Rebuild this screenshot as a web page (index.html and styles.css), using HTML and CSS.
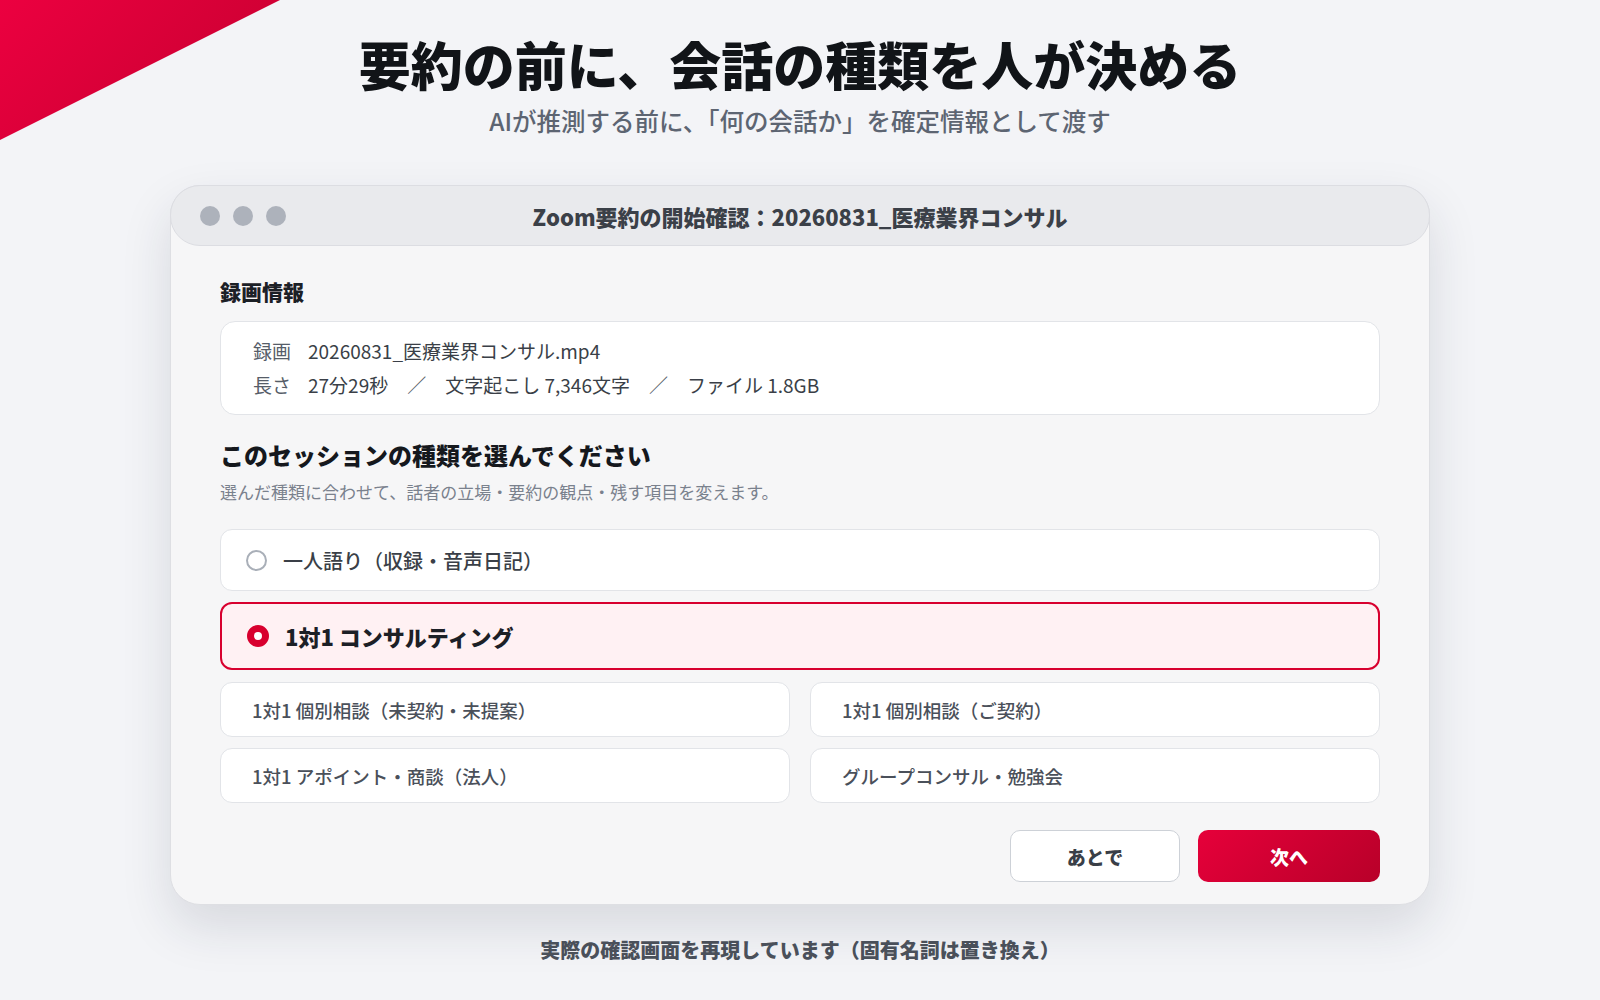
FILE: index.html
```html
<!DOCTYPE html>
<html lang="ja">
  <head>
    <meta charset="UTF-8" />
    <meta name="viewport" content="width=device-width, initial-scale=1.0" />
    <title>要約の前に、会話の種類を人が決める</title>
    <link rel="stylesheet" href="styles.css">
  </head>
  <body>
    <div class="corner"></div>
    <div class="page">
      <h1 class="title">要約の前に、会話の種類を人が決める</h1>
      <p class="lead">AIが推測する前に、「何の会話か」を確定情報として渡す</p>

      <div class="window">
        <div class="titlebar">
          <div class="dots"><span></span><span></span><span></span></div>
          <div class="wintitle">Zoom要約の開始確認：20260831_医療業界コンサル</div>
        </div>
        <div class="content">
          <h2 class="label">録画情報</h2>
          <div class="info">
            <div class="row"><span class="key">録画</span><span>20260831_医療業界コンサル.mp4</span></div>
            <div class="row">
              <span class="key">長さ</span><span>27分29秒</span>
              <span class="sep">／</span><span>文字起こし 7,346文字</span>
              <span class="sep">／</span><span>ファイル 1.8GB</span>
            </div>
          </div>

          <h2 class="question">このセッションの種類を選んでください</h2>
          <p class="hint">選んだ種類に合わせて、話者の立場・要約の観点・残す項目を変えます。</p>

          <div class="option">
            <span class="radio"></span>
            <span>一人語り（収録・音声日記）</span>
          </div>
          <div class="option selected">
            <span class="radio"></span>
            <span>1対1 コンサルティング</span>
          </div>
          <div class="subs">
            <div class="sub">1対1 個別相談（未契約・未提案）</div>
            <div class="sub">1対1 個別相談（ご契約）</div>
            <div class="sub">1対1 アポイント・商談（法人）</div>
            <div class="sub">グループコンサル・勉強会</div>
          </div>

          <div class="actions">
            <a class="btn later" href="#">あとで</a>
            <a class="btn next" href="#">次へ</a>
          </div>
        </div>
      </div>

      <p class="note">実際の確認画面を再現しています（固有名詞は置き換え）</p>
    </div>
  </body>
</html>
```

FILE: styles.css
```css
* {
  margin: 0;
  padding: 0;
  box-sizing: border-box;
}
body {
  width: 1600px;
  height: 1000px;
  overflow: hidden;
  background-color: #f3f4f7;
  font-family: "Noto Sans CJK JP", "Noto Sans", sans-serif;
  color: #3a3f47;
  position: relative;
}
a {
  text-decoration: none;
}
.corner {
  position: absolute;
  top: 0;
  left: 0;
  width: 280px;
  height: 140px;
  background: linear-gradient(135deg, #ec0040, #c4002f);
  clip-path: polygon(0 0, 100% 0, 0 100%);
}
.page {
  padding-top: 33px;
  text-align: center;
}
.title {
  font-size: 52px;
  line-height: 62px;
  font-weight: 900;
  color: #111418;
}
.lead {
  margin-top: 10px;
  font-size: 24.5px;
  line-height: 31px;
  color: #5d6572;
  font-weight: 500;
}
.window {
  width: 1260px;
  margin: 49px auto 0;
  background-color: #f6f6f7;
  border: 1px solid #dedfe3;
  border-radius: 30px;
  box-shadow: 0 22px 50px rgba(30, 40, 60, 0.13);
  text-align: left;
}
.titlebar {
  height: 61px;
  margin: -1px -1px 0;
  background-color: #e9eaed;
  border: 1px solid #dcdde2;
  border-radius: 30px;
  display: flex;
  align-items: center;
  position: relative;
}
.dots {
  display: flex;
  gap: 13px;
  padding-left: 29px;
}
.dots span {
  width: 20px;
  height: 20px;
  border-radius: 50%;
  background-color: #adb2bb;
}
.wintitle {
  position: absolute;
  left: 0;
  right: 0;
  text-align: center;
  font-size: 22px;
  font-weight: 900;
  color: #3b4048;
}
.content {
  padding: 30px 49px 22px;
}
.label {
  font-size: 21px;
  line-height: 30px;
  font-weight: 900;
  color: #1c2026;
}
.info {
  margin-top: 15px;
  background-color: #fff;
  border: 1px solid #e2e4e8;
  border-radius: 15px;
  padding: 12px 32px;
}
.row {
  font-size: 19px;
  line-height: 34px;
  color: #3a3f47;
  display: flex;
}
.key {
  color: #565d68;
  margin-right: 17px;
}
.sep {
  margin: 0 19px;
  color: #565d68;
}
.question {
  margin-top: 24px;
  font-size: 24px;
  line-height: 32px;
  font-weight: 900;
  color: #15181d;
}
.hint {
  margin-top: 9px;
  font-size: 17px;
  line-height: 24px;
  color: #7a818d;
}
.option {
  margin-top: 25px;
  height: 62px;
  background-color: #fff;
  border: 1.5px solid #e2e4e8;
  border-radius: 12px;
  display: flex;
  align-items: center;
  padding-left: 25px;
  font-size: 20px;
  font-weight: 500;
  color: #3a3f47;
}
.option .radio {
  width: 21px;
  height: 21px;
  border-radius: 50%;
  border: 2px solid #a9afb8;
  margin-right: 16px;
}
.option.selected {
  margin-top: 11px;
  height: 68px;
  background-color: #fff1f3;
  border: 2px solid #d8002e;
  font-size: 22px;
  font-weight: 900;
  color: #1c2026;
}
.option.selected .radio {
  width: 22px;
  height: 22px;
  border: 7px solid #d8002e;
  background-color: #fff;
}
.subs {
  margin-top: 12px;
  display: grid;
  grid-template-columns: 1fr 1fr;
  gap: 11px 20px;
}
.sub {
  height: 55px;
  background-color: #fff;
  border: 1.5px solid #e2e4e8;
  border-radius: 12px;
  display: flex;
  align-items: center;
  padding-left: 31px;
  font-size: 18.5px;
  font-weight: 500;
  color: #4a505a;
}
.actions {
  margin-top: 27px;
  display: flex;
  justify-content: flex-end;
  gap: 18px;
}
.btn {
  height: 52px;
  border-radius: 10px;
  display: flex;
  align-items: center;
  justify-content: center;
  font-size: 19px;
  font-weight: 900;
}
.later {
  width: 170px;
  background-color: #fff;
  border: 1.5px solid #cdd1d7;
  color: #3a3f47;
}
.next {
  width: 182px;
  background: linear-gradient(135deg, #e6003a, #b80029);
  color: #fff;
}
.note {
  margin-top: 30px;
  font-size: 20px;
  line-height: 30px;
  font-weight: 900;
  color: #4a505a;
}
```
